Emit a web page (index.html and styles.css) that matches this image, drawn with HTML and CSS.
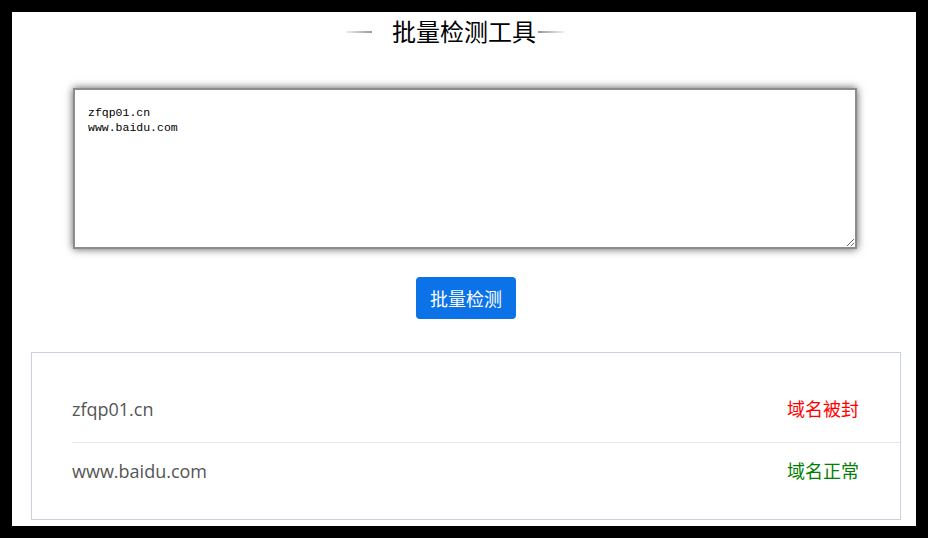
FILE: index.html
```html
<!DOCTYPE html>
<html lang="zh-CN">
<head>
  <meta charset="UTF-8" />
  <meta name="viewport" content="width=device-width, initial-scale=1.0" />
  <title>批量检测工具</title>
  <link rel="stylesheet" href="styles.css">
</head>
<body>
  <div class="page">
    <!-- Title with side rules -->
    <h1 class="title">
      <span class="rule rule-left"></span>
      <span class="title-text">批量检测工具</span>
      <span class="rule rule-right"></span>
    </h1>

    <!-- Domain input -->
    <textarea class="domains" spellcheck="false">zfqp01.cn
www.baidu.com</textarea>

    <div class="actions">
      <button class="check-btn">批量检测</button>
    </div>

    <!-- Results -->
    <div class="results">
      <ul class="result-list">
        <li class="result-row">
          <span class="domain">zfqp01.cn</span>
          <span class="status blocked">域名被封</span>
        </li>
        <li class="result-row">
          <span class="domain">www.baidu.com</span>
          <span class="status ok">域名正常</span>
        </li>
      </ul>
    </div>
  </div>
</body>
</html>
```

FILE: styles.css
```css
* {
  margin: 0;
  padding: 0;
  box-sizing: border-box;
}

body {
  background-color: #000;
  padding: 12px;
  font-family: 'Noto Sans CJK SC', sans-serif;
}

.page {
  background-color: #fff;
  min-height: calc(100vh - 24px);
}

/* Heading */
.title {
  display: flex;
  justify-content: center;
  align-items: center;
  height: 38px;
  font-size: 24px;
  font-weight: normal;
  line-height: 38px;
  color: #000;
}
.rule {
  width: 26px;
  height: 2px;
  margin-top: 2px;
}
.rule-left {
  margin-right: 20px;
  background: linear-gradient(90deg, #eee, #999);
}
.rule-right {
  margin-left: 2px;
  margin-right: 18px;
  background: linear-gradient(90deg, #999, #eee);
}

/* Input */
.domains {
  display: block;
  width: 784px;
  height: 161px;
  margin: 38px 0 0 61px;
  padding: 15px 13px;
  border: 2px solid #8c8c8c;
  box-shadow: 0 0 8px rgba(0, 0, 0, 0.65);
  font-family: 'Liberation Mono', monospace;
  font-size: 11.5px;
  line-height: 15px;
  color: #000;
  outline: none;
}

.actions {
  display: flex;
  justify-content: center;
  padding-left: 4px;
  margin-top: 28px;
}

.check-btn {
  height: 42px;
  padding: 0 14px;
  background-color: #0b72e7;
  color: #fff;
  border: none;
  border-radius: 4px;
  font-family: 'Noto Sans CJK SC', sans-serif;
  font-size: 18px;
  cursor: pointer;
}
.check-btn:hover {
  background-color: #0862c8;
}

/* Result list */
.results {
  width: 870px;
  margin: 33px 0 0 19px;
  padding: 28px 0 15px 40px;
  border: 1px solid #c9d0de;
}

.result-list {
  list-style: none;
}

.result-row {
  display: flex;
  justify-content: space-between;
  align-items: baseline;
  padding: 15px 41px 21px 0;
  line-height: 24px;
  font-size: 18px;
}
.result-row + .result-row {
  border-top: 1px solid #e6e6e6;
}

.domain {
  font-family: 'Open Sans', 'Noto Sans CJK SC', sans-serif;
  color: #555;
}

.status.blocked {
  color: #f00;
}
.status.ok {
  color: #008000;
}
```
